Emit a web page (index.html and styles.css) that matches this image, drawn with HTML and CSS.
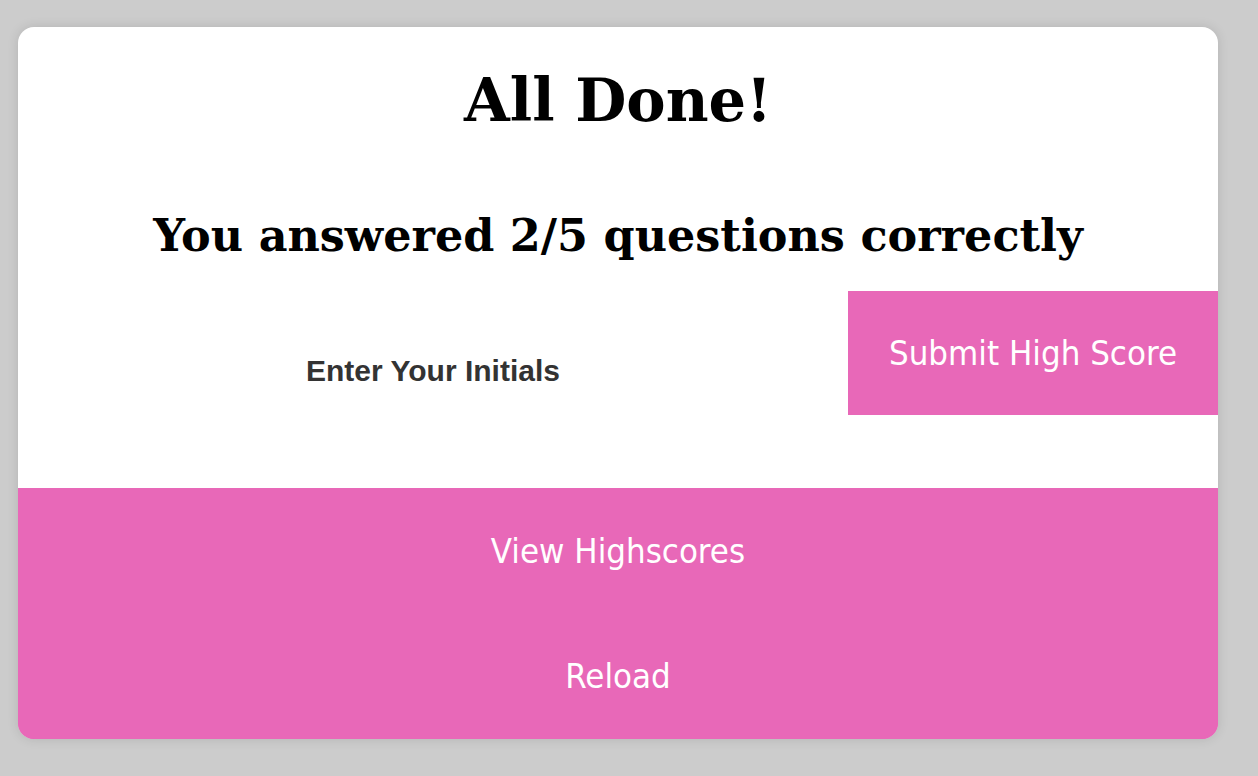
FILE: index.html
```html
<!DOCTYPE html>
<html>
<head>
<meta charset="utf-8">
<link rel="stylesheet" href="styles.css">
</head>
<body>
<main class="card">
  <h1 class="title">All Done!</h1>
  <h2 class="score">You answered 2/5 questions correctly</h2>
  <form class="entry">
    <label class="entry-label">Enter Your Initials</label>
    <button type="button" class="btn btn-submit">Submit High Score</button>
  </form>
  <div class="actions">
    <button type="button" class="btn btn-wide">View Highscores</button>
    <button type="button" class="btn btn-wide">Reload</button>
  </div>
</main>
</body>
</html>
```
FILE: styles.css
```css
html, body {
  margin: 0;
  padding: 0;
}
body {
  background: #cccccc;
  padding: 27px 40px 37px 18px;
  font-family: "DejaVu Serif", serif;
}
.card {
  width: 1200px;
  background: #ffffff;
  border-radius: 16px;
  overflow: hidden;
  box-shadow: 0 0 12px rgba(0, 0, 0, 0.12);
  display: flex;
  flex-direction: column;
}
.title {
  margin: 0;
  padding-top: 24px;
  height: 88px;
  box-sizing: border-box;
  text-align: center;
  font-family: "DejaVu Serif", serif;
  font-weight: bold;
  font-size: 59px;
  line-height: 100px;
  color: #000;
}
.score {
  margin: 0;
  padding-top: 80px;
  text-align: center;
  font-family: "DejaVu Serif", serif;
  font-weight: bold;
  font-size: 44.5px;
  line-height: 80px;
  color: #000;
}
.entry {
  display: flex;
  align-items: flex-start;
  margin-top: 16px;
  margin-bottom: 73px;
}
.entry-label {
  flex: 1;
  text-align: center;
  font-family: "Liberation Sans", Arial, sans-serif;
  font-weight: bold;
  font-size: 30px;
  color: #333333;
  line-height: 28px;
  padding-top: 66px;
}
.btn {
  border: 0;
  margin: 0;
  background: #e868b8;
  color: #ffffff;
  font-family: "DejaVu Sans Condensed", "DejaVu Sans", sans-serif;
  font-size: 34.5px;
  cursor: pointer;
}
.btn-submit {
  width: 370px;
  height: 124px;
}
.actions {
  display: flex;
  flex-direction: column;
  background: #e868b8;
}
.btn-wide {
  width: 100%;
  height: 125.5px;
}
```
